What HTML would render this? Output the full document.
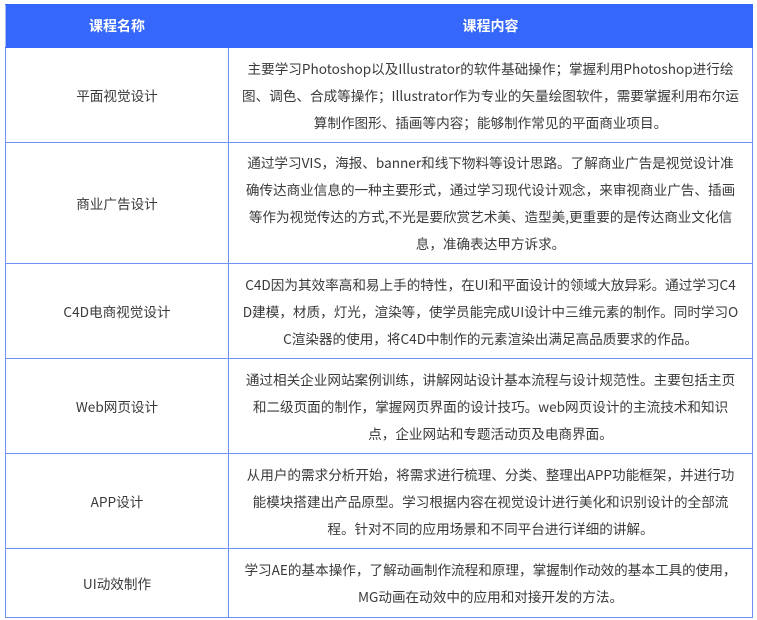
<!DOCTYPE html>
<html><head><meta charset="utf-8"><style>
body{margin:0;background:#fff;font-family:"Noto Sans CJK SC","Liberation Sans",sans-serif;}
table{position:absolute;left:5px;top:4px;width:748px;border-collapse:collapse;table-layout:fixed;}
td,th{border:1px solid #6f93f5;text-align:center;vertical-align:middle;color:#3a3a3a;font-size:13.6px;line-height:27px;padding:0 4px;white-space:nowrap;overflow:hidden;}
th{background:#3567fb;color:#fff;font-weight:bold;height:42px;border-color:#3567fb;font-size:14px;}
th:first-child{border-left-color:#a9bdf3}
</style></head><body>
<table>
<colgroup><col style="width:223px"><col></colgroup>
<tr><th>课程名称</th><th>课程内容</th></tr>
<tr style="height:95px"><td>平面视觉设计</td><td>主要学习Photoshop以及Illustrator的软件基础操作；掌握利用Photoshop进行绘<br>图、调色、合成等操作；Illustrator作为专业的矢量绘图软件，需要掌握利用布尔运<br>算制作图形、插画等内容；能够制作常见的平面商业项目。</td></tr>
<tr style="height:121px"><td>商业广告设计</td><td>通过学习VIS，海报、banner和线下物料等设计思路。了解商业广告是视觉设计准<br>确传达商业信息的一种主要形式，通过学习现代设计观念，来审视商业广告、插画<br>等作为视觉传达的方式,不光是要欣赏艺术美、造型美,更重要的是传达商业文化信<br>息，准确表达甲方诉求。</td></tr>
<tr style="height:95px"><td>C4D电商视觉设计</td><td>C4D因为其效率高和易上手的特性，在UI和平面设计的领域大放异彩。通过学习C4<br>D建模，材质，灯光，渲染等，使学员能完成UI设计中三维元素的制作。同时学习O<br>C渲染器的使用，将C4D中制作的元素渲染出满足高品质要求的作品。</td></tr>
<tr style="height:95px"><td>Web网页设计</td><td>通过相关企业网站案例训练，讲解网站设计基本流程与设计规范性。主要包括主页<br>和二级页面的制作，掌握网页界面的设计技巧。web网页设计的主流技术和知识<br>点，企业网站和专题活动页及电商界面。</td></tr>
<tr style="height:95px"><td>APP设计</td><td>从用户的需求分析开始，将需求进行梳理、分类、整理出APP功能框架，并进行功<br>能模块搭建出产品原型。学习根据内容在视觉设计进行美化和识别设计的全部流<br>程。针对不同的应用场景和不同平台进行详细的讲解。</td></tr>
<tr style="height:69px"><td>UI动效制作</td><td>学习AE的基本操作，了解动画制作流程和原理，掌握制作动效的基本工具的使用，<br>MG动画在动效中的应用和对接开发的方法。</td></tr>
</table>
</body></html>
